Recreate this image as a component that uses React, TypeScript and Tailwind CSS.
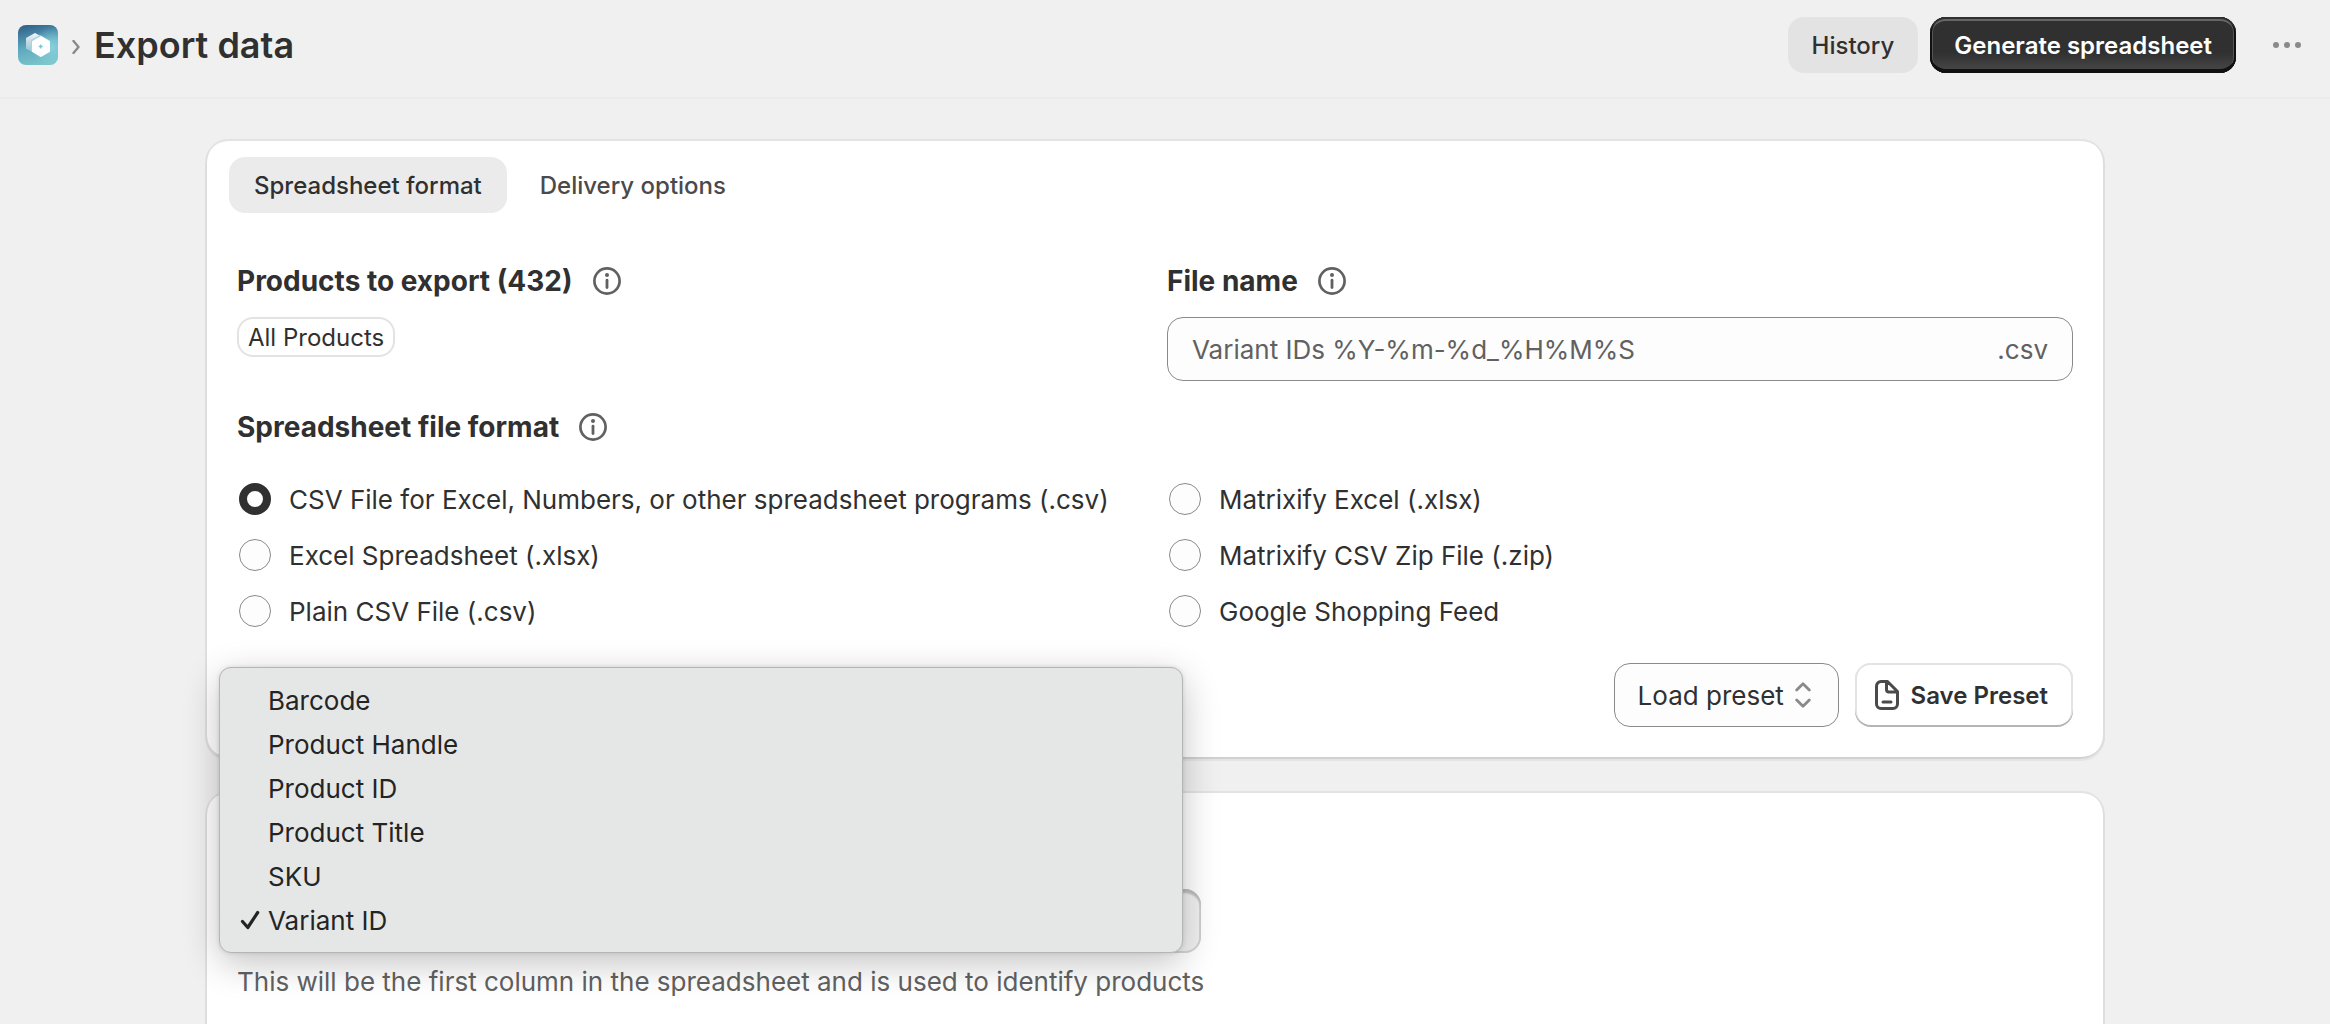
import type { ReactNode } from "react";

const formats = [
    "CSV File for Excel, Numbers, or other spreadsheet programs (.csv)",
    "Matrixify Excel (.xlsx)",
    "Excel Spreadsheet (.xlsx)",
    "Matrixify CSV Zip File (.zip)",
    "Plain CSV File (.csv)",
    "Google Shopping Feed",
];

const columns = ["Barcode", "Product Handle", "Product ID", "Product Title", "SKU", "Variant ID"];

function Logo() {
    return (
        <svg viewBox="0 0 40 40" className="size-10 rounded-lg" aria-hidden="true">
            <defs>
                <linearGradient id="logo-bg" x1="0.4" y1="0" x2="0.65" y2="1">
                    <stop offset="0" stopColor="#34688f" />
                    <stop offset="0.5" stopColor="#5fa9bf" />
                    <stop offset="1" stopColor="#7cc6cb" />
                </linearGradient>
                <radialGradient id="logo-glow" cx="0.85" cy="0.55" r="0.5">
                    <stop offset="0" stopColor="#8ad3de" stopOpacity="0.9" />
                    <stop offset="1" stopColor="#8ad3de" stopOpacity="0" />
                </radialGradient>
                <linearGradient id="logo-back" x1="0" y1="0" x2="0" y2="1">
                    <stop offset="0" stopColor="#fff" stopOpacity="0.95" />
                    <stop offset="1" stopColor="#fff" stopOpacity="0.25" />
                </linearGradient>
            </defs>
            <rect width="40" height="40" fill="url(#logo-bg)" />
            <rect width="40" height="40" fill="url(#logo-glow)" />
            <path d="M17 8l9 5v10.500l-9 5-9-5V13z" fill="url(#logo-back)" />
            <path d="M22 10l10 5.500v11L22 32l-9-6v-11z" fill="#a9d3e0" />
            <path d="M23 11l9 5.200v10.600L23 32l-9-5.200V16.200z" fill="#fff" />
            <path d="M22.700 19.500v4M20.700 21.500h4" stroke="#7cc3d2" strokeWidth="1.300" />
        </svg>
    );
}

function InfoIcon() {
    return (
        <svg viewBox="0 0 28 28" fill="none" className="size-7 shrink-0" aria-hidden="true">
            <circle cx="14" cy="14" r="12.600" stroke="#616161" strokeWidth="2.700" />
            <circle cx="14" cy="8" r="2" fill="#616161" />
            <path d="M14 13.200v7.300" stroke="#616161" strokeWidth="2.800" strokeLinecap="round" />
        </svg>
    );
}

function Heading({ children }: { children: ReactNode }) {
    return (
        <div className="flex h-9 items-center gap-5 text-[28px] leading-9 font-[650]">
            {children}
            <InfoIcon />
        </div>
    );
}

function Header() {
    return (
        <header className="flex h-[99px] items-start justify-between border-b-2 border-[#ebebeb] pt-[17px] pr-1 pl-[18px]">
            <div className="flex h-14 items-center">
                <a href="#" aria-label="Home">
                    <Logo />
                </a>
                <svg viewBox="0 0 8 14" fill="none" className="mx-[14px] mt-1 h-[14px] w-2" aria-hidden="true">
                    <path d="M1.500 1l5 6-5 6" stroke="#8a8a8a" strokeWidth="2.400" strokeLinecap="round" strokeLinejoin="round" />
                </svg>
                <h1 className="text-4xl font-semibold">Export data</h1>
            </div>

            <div className="flex items-center gap-3">
                <button className="h-14 rounded-2xl bg-[#e3e3e3] px-6 pt-[2px] text-2xl font-[550]">History</button>
                <button className="h-14 rounded-2xl bg-[linear-gradient(180deg,#303030_63%,#4a4a4a_100%)] px-6 pt-[2px] text-2xl font-semibold text-white shadow-[inset_0_2px_0_#303030,inset_0_-4px_0_#111,inset_2px_0_0_#111,inset_-2px_0_0_#111,inset_0_4px_0_#666,inset_3px_0_0_#555,inset_-3px_0_0_#555]">
                    Generate spreadsheet
                </button>
                <button aria-label="More actions" className="flex h-14 w-[78px] items-center justify-center">
                    <svg viewBox="0 0 28 6" fill="#8a8a8a" className="h-[6px] w-7">
                        <circle cx="3" cy="3" r="3" />
                        <circle cx="14" cy="3" r="3" />
                        <circle cx="25" cy="3" r="3" />
                    </svg>
                </button>
            </div>
        </header>
    );
}

function FormatCard() {
    return (
        <section className="rounded-3xl bg-white px-8 pt-[18px] pb-8 shadow-[inset_0_2px_0_#e3e3e3,inset_2px_0_0_#dedede,inset_-2px_0_0_#dedede,inset_0_-2px_0_#d0d0d0,0_2px_0_#e4e4e4]">
            <div role="tablist" className="-mx-2 flex gap-2 text-2xl">
                <button
                    role="tab"
                    aria-selected="true"
                    className="h-14 rounded-2xl bg-[#ebebeb] px-[25px] pt-[2px] font-[550]"
                >
                    Spreadsheet format
                </button>
                <button
                    role="tab"
                    aria-selected="false"
                    className="h-14 rounded-2xl px-[25px] pt-[2px] font-[550] text-[#4a4a4a]"
                >
                    Delivery options
                </button>
            </div>

            <div className="mt-[50px] grid grid-cols-2 gap-6">
                <div>
                    <Heading>
                        <h2>Products to export (432)</h2>
                    </Heading>
                    <span className="mt-[18px] inline-flex h-10 items-center rounded-2xl border-2 border-[#e3e3e3] px-[9px] pt-[2px] text-2xl">
                        All Products
                    </span>
                </div>
                <div>
                    <Heading>
                        <label htmlFor="file-name">File name</label>
                    </Heading>
                    <div className="mt-[18px] flex h-16 items-center rounded-2xl border border-[#8a8a8a] bg-[#fdfdfd] px-6 text-[26px] text-[#616161]">
                        <input
                            id="file-name"
                            placeholder="Variant IDs %Y-%m-%d_%H%M%S"
                            className="min-w-0 flex-1 outline-none placeholder:text-[#616161]"
                        />
                        <span>.csv</span>
                    </div>
                </div>
            </div>

            <div className="mt-7">
                <Heading>
                    <h2>Spreadsheet file format</h2>
                </Heading>
            </div>
            <div className="mt-[26px] grid grid-cols-2 gap-x-6">
                {formats.map((format, i) => (
                    <label key={format} className="flex h-14 items-center gap-[18px] pl-[2px] text-[26px]">
                        <input
                            type="radio"
                            name="format"
                            defaultChecked={i === 0}
                            className="size-8 shrink-0 appearance-none rounded-full border border-[#8a8a8a] bg-[#fdfdfd] checked:border-8 checked:border-[#303030]"
                        />
                        {format}
                    </label>
                ))}
            </div>

            <div className="mt-6 flex justify-end gap-4">
                <div className="relative">
                    <select
                        aria-label="Load preset"
                        className="h-16 w-[225px] appearance-none rounded-2xl border border-[#8a8a8a] bg-[#fdfdfd] pl-[23px] text-[26px]"
                    >
                        <option>Load preset</option>
                    </select>
                    <svg
                        viewBox="0 0 16 26"
                        fill="none"
                        className="pointer-events-none absolute top-[19px] right-7 h-[26px] w-4"
                        aria-hidden="true"
                    >
                        <path
                            d="M1.700 8L8 1.700 14.300 8M1.700 18L8 24.300 14.300 18"
                            stroke="#8a8a8a"
                            strokeWidth="2.800"
                            strokeLinecap="round"
                            strokeLinejoin="round"
                        />
                    </svg>
                </div>
                <button className="flex h-16 items-center gap-3 rounded-2xl bg-white pr-[25px] pl-5 text-2xl font-semibold shadow-[inset_0_-2px_0_#b5b5b5,inset_0_2px_0_#e3e3e3,inset_2px_0_0_#e3e3e3,inset_-2px_0_0_#e3e3e3]">
                    <svg viewBox="0 0 24 30" fill="none" className="h-[30px] w-6" aria-hidden="true">
                        <path
                            d="M12.500 1.500H6A4.500 4.500 0 0 0 1.500 6v18A4.500 4.500 0 0 0 6 28.500h12a4.500 4.500 0 0 0 4.500-4.500V11.500zM11.500 1.500V9.500a2.500 2.500 0 0 0 2.500 2.500h8M8 22h8"
                            stroke="#4a4a4a"
                            strokeWidth="3"
                            strokeLinecap="round"
                            strokeLinejoin="round"
                        />
                    </svg>
                    <span className="pt-[2px]">Save Preset</span>
                </button>
            </div>
        </section>
    );
}

function ColumnMenu() {
    return (
        <ul
            role="listbox"
            aria-label="Product identifier"
            className="absolute bottom-0 -left-[18px] w-full rounded-xl border border-[#b4b6b5] bg-[#e5e7e6] py-[10px] text-[26px] text-[#242424] shadow-[0_10px_36px_rgba(0,0,0,0.24),0_0_4px_rgba(0,0,0,0.12)]"
        >
            {columns.map((column) => (
                <li
                    key={column}
                    role="option"
                    aria-selected={column === "Variant ID"}
                    className="flex h-11 items-center pl-5"
                >
                    <span className="w-7">
                        {column === "Variant ID" && (
                            <svg viewBox="0 0 20 20" fill="none" className="size-5" aria-hidden="true">
                                <path
                                    d="M2.500 11.500l5.300 6L17.700 2.500"
                                    stroke="#242424"
                                    strokeWidth="3.200"
                                    strokeLinecap="round"
                                    strokeLinejoin="round"
                                />
                            </svg>
                        )}
                    </span>
                    {column}
                </li>
            ))}
        </ul>
    );
}

function IdentifierCard() {
    return (
        <section className="mt-8 flex-1 rounded-t-3xl bg-white px-8 pt-[98px] shadow-[inset_0_2px_0_#e3e3e3,inset_2px_0_0_#dedede,inset_-2px_0_0_#dedede]">
            <div className="w-[964px]">
                <div className="relative">
                    <select
                        aria-label="Product identifier"
                        aria-describedby="identifier-help"
                        defaultValue="Variant ID"
                        className="block h-16 w-full appearance-none rounded-2xl bg-[#f1f1f1] px-6 text-[26px] shadow-[inset_0_4px_2px_#bdbdbd,inset_0_0_0_2px_#d4d4d4]"
                    >
                        {columns.map((column) => (
                            <option key={column}>{column}</option>
                        ))}
                    </select>
                    <ColumnMenu />
                </div>
                <p id="identifier-help" className="pt-[9px] text-[26px] leading-10 whitespace-nowrap text-[#616161]">
                    This will be the first column in the spreadsheet and is used to identify products
                </p>
            </div>
        </section>
    );
}

export default function App() {
    return (
        <div className="flex min-h-screen flex-col bg-[#f0f0f0] font-['Inter',sans-serif] text-[#303030]">
            <Header />
            <main className="flex flex-1 flex-col pt-10 pr-5">
                <div className="mx-auto flex w-full max-w-[1900px] flex-1 flex-col">
                    <FormatCard />
                    <IdentifierCard />
                </div>
            </main>
        </div>
    );
}
